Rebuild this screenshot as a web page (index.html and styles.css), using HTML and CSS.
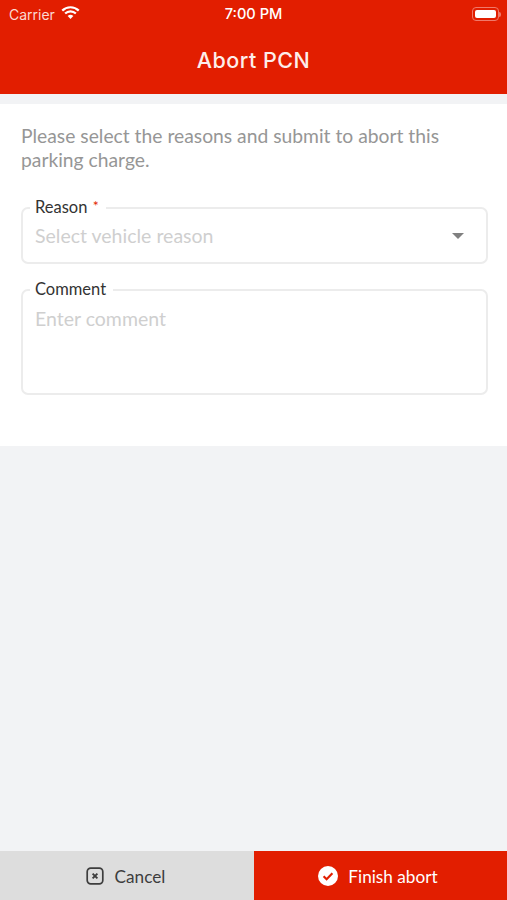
FILE: index.html
```html
<!DOCTYPE html>
<html lang="en">
<head>
    <meta charset="UTF-8">
    <meta name="viewport" content="width=device-width, initial-scale=1.0">
    <title>Abort PCN</title>
    <link rel="stylesheet" href="styles.css">
</head>
<body>

    <!-- Header -->
    <header class="app-header">
        <div class="status-bar">
            <div class="status-left">
                <span>Carrier</span>
                <svg class="wifi-icon" width="19" height="15" viewBox="0 0 18 14">
                    <path d="M9 13.2 6.3 10.4a3.9 3.9 0 0 1 5.4 0Z" fill="currentColor"/>
                    <path d="M3.9 8a7.3 7.3 0 0 1 10.2 0" fill="none" stroke="currentColor" stroke-width="2.1"/>
                    <path d="M1.2 5.2a11.2 11.2 0 0 1 15.6 0" fill="none" stroke="currentColor" stroke-width="2.1"/>
                </svg>
            </div>
            <div class="status-time">7:00 PM</div>
            <div class="status-right">
                <div class="battery"><div class="battery-fill"></div></div>
                <div class="battery-cap"></div>
            </div>
        </div>
        <h1 class="page-title">Abort PCN</h1>
    </header>

    <!-- Form -->
    <main class="form-card">
        <p class="intro">Please select the reasons and submit to abort this parking charge.</p>

        <fieldset class="field field-select">
            <legend>Reason <span class="required">*</span></legend>
            <span class="placeholder">Select vehicle reason</span>
            <span class="caret"></span>
        </fieldset>

        <fieldset class="field field-comment">
            <legend>Comment</legend>
            <span class="placeholder">Enter comment</span>
        </fieldset>
    </main>

    <div class="spacer"></div>

    <!-- Bottom buttons -->
    <footer class="actions">
        <button class="action action-cancel">
            <svg width="18" height="18" viewBox="0 0 18 18">
                <rect x="1.2" y="1.2" width="15.6" height="15.6" rx="3.5" fill="none" stroke="currentColor" stroke-width="1.7"/>
                <path d="M6.6 6.6l4.8 4.8M11.4 6.6l-4.8 4.8" fill="none" stroke="currentColor" stroke-width="1.9"/>
            </svg>
            <span>Cancel</span>
        </button>
        <button class="action action-finish">
            <svg width="20" height="20" viewBox="0 0 20 20">
                <circle cx="10" cy="10" r="10" fill="#fff"/>
                <path d="M5.6 10.3l3 3 5.8-6" fill="none" stroke="#e21e00" stroke-width="2.2"/>
            </svg>
            <span>Finish abort</span>
        </button>
    </footer>

</body>
</html>
```

FILE: styles.css
```css
* {
    box-sizing: border-box;
}

html, body {
    height: 100%;
}

body {
    margin: 0;
    display: flex;
    flex-direction: column;
    height: 900px;
    background-color: #f2f3f5;
    font-family: 'Lato', sans-serif;
    overflow: hidden;
}

/* Header */
.app-header {
    height: 94px;
    background-color: #e21e00;
    color: #fff;
}

.status-bar {
    position: relative;
    display: flex;
    justify-content: space-between;
    align-items: center;
    height: 28px;
    padding: 0 6px 0 9px;
    font-family: 'Inter', sans-serif;
    font-size: 14px;
}

.status-left {
    display: flex;
    align-items: center;
    gap: 6px;
    color: #fbd9d2;
}

.wifi-icon {
    color: #fff;
    margin-top: -3px;
}

.status-time {
    position: absolute;
    left: 0;
    right: 0;
    text-align: center;
    font-size: 14.6px;
    font-weight: 500;
}

.status-right {
    display: flex;
    align-items: center;
}

.battery {
    width: 27px;
    height: 14px;
    padding: 2px;
    border: 1.5px solid #f0796a;
    border-radius: 4px;
}

.battery-fill {
    height: 100%;
    background-color: #fff;
    border-radius: 2px;
}

.battery-cap {
    width: 2px;
    height: 5px;
    background-color: #f0796a;
    border-radius: 0 2px 2px 0;
}

.page-title {
    margin: 5px 0 0;
    text-align: center;
    font-family: 'Inter', sans-serif;
    font-size: 21.5px;
    font-weight: 500;
    letter-spacing: 0.5px;
    line-height: 54px;
    height: 54px;
    color: #fdeeeb;
}

/* Form */
.form-card {
    margin-top: 10px;
    padding: 20px 19px 51px 21px;
    background-color: #fff;
}

.intro {
    margin: 0 0 25px;
    font-size: 19.3px;
    line-height: 24px;
    color: #969696;
}

.field {
    position: relative;
    margin: 0 0 16px;
    padding: 0 14px 0 12px;
    border: 2px solid #ececec;
    border-radius: 7px;
}

.field legend {
    margin-left: -5px;
    padding: 0 7px 2px 5px;
    font-size: 16.5px;
    line-height: 18px;
    color: #333;
}

.required {
    color: #e21e00;
    font-size: 14px;
    vertical-align: 2px;
    margin-left: 1px;
}

.placeholder {
    font-size: 19.5px;
    line-height: 24px;
    color: #cfcfcf;
}

.field-select {
    display: flex;
    justify-content: space-between;
    align-items: center;
    height: 67px;
    padding-bottom: 9px;
}

.caret {
    width: 0;
    height: 0;
    margin-right: 8px;
    border-left: 6.5px solid transparent;
    border-right: 6.5px solid transparent;
    border-top: 6px solid #808080;
}

.field-comment {
    height: 115px;
    margin-bottom: 0;
    padding-top: 7px;
}

.field-comment .placeholder {
    display: block;
}

.spacer {
    flex: 1;
}

/* Bottom buttons */
.actions {
    display: flex;
    height: 49px;
}

.action {
    display: flex;
    align-items: center;
    justify-content: center;
    border: none;
    padding: 1px 3px 0 0;
    font-family: 'Lato', sans-serif;
    font-size: 17.2px;
}

.action-cancel {
    width: 254px;
    gap: 11px;
    background-color: #dddddd;
    color: #3d3d3d;
}

.action-finish {
    flex: 1;
    gap: 10px;
    padding-right: 5px;
    background-color: #e21e00;
    color: #fff;
}
```
